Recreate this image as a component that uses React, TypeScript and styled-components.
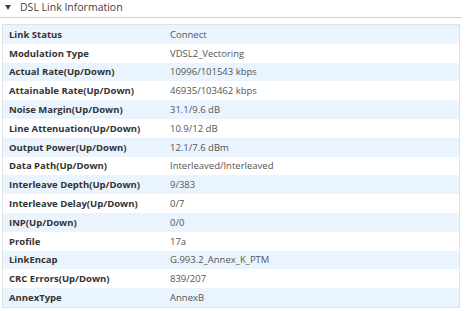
import React from 'react';
import styled, { createGlobalStyle } from 'styled-components';

const rows: [string, string][] = [
    ['Link Status', 'Connect'],
    ['Modulation Type', 'VDSL2_Vectoring'],
    ['Actual Rate(Up/Down)', '10996/101543 kbps'],
    ['Attainable Rate(Up/Down)', '46935/103462 kbps'],
    ['Noise Margin(Up/Down)', '31.1/9.6 dB'],
    ['Line Attenuation(Up/Down)', '10.9/12 dB'],
    ['Output Power(Up/Down)', '12.1/7.6 dBm'],
    ['Data Path(Up/Down)', 'Interleaved/Interleaved'],
    ['Interleave Depth(Up/Down)', '9/383'],
    ['Interleave Delay(Up/Down)', '0/7'],
    ['INP(Up/Down)', '0/0'],
    ['Profile', '17a'],
    ['LinkEncap', 'G.993.2_Annex_K_PTM'],
    ['CRC Errors(Up/Down)', '839/207'],
    ['AnnexType', 'AnnexB'],
];

const App = () => {
    return (
        <>
            <GlobalStyle />
            <Page>
                <Header>
                    <Arrow />
                    <Title>DSL Link Information</Title>
                </Header>
                <InfoTable>
                    {rows.map(([label, value], i) => (
                        <Row key={label} $striped={i % 2 === 0}>
                            <Label>{label}</Label>
                            <Value>{value}</Value>
                        </Row>
                    ))}
                </InfoTable>
            </Page>
        </>
    );
};

export default App;

const GlobalStyle = createGlobalStyle`
    body {
        margin: 0;
        background: #fff;
        font-family: "Open Sans", "Noto Sans", sans-serif;
    }
`;

const Page = styled.div`
    width: 465px;
`;

const Header = styled.div`
    display: flex;
    align-items: center;
    height: 17px;
    margin-right: 3px;
    border-bottom: 1px solid #cfcfcf;
    padding-left: 5px;
`;

const Arrow = styled.span`
    width: 0;
    height: 0;
    border-style: solid;
    border-width: 5px 3px 0 3px;
    border-color: #444 transparent transparent transparent;
    margin-right: 9px;
    margin-top: -2px;
`;

const Title = styled.span`
    font-size: 10.5px;
    color: #444;
    line-height: 14px;
    margin-top: -4px;
`;

const InfoTable = styled.div`
    margin: 6px 5px 0 2px;
    border: 1px solid #dde3ea;
`;

const Row = styled.div<{ $striped: boolean }>`
    display: grid;
    grid-template-columns: 161px 1fr;
    align-items: center;
    height: 18.8px;
    padding-left: 6px;
    background: ${p => (p.$striped ? '#eaf4fe' : '#fff')};
`;

const Label = styled.span`
    font-size: 9.5px;
    font-weight: 700;
    color: #333;
`;

const Value = styled.span`
    font-size: 9.5px;
    color: #555;
`;
